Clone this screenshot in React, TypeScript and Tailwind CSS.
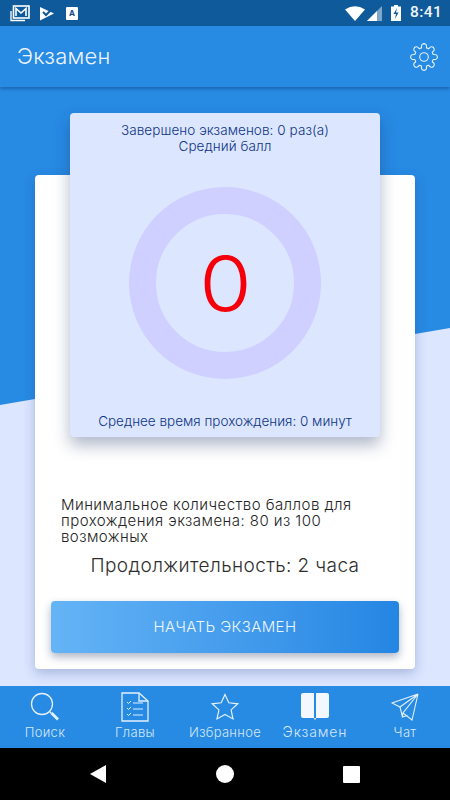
const F = "[font-family:Inter,'Noto_Sans',sans-serif]";

function Gear() {
  const teeth = [0, 45, 90, 135, 180, 225, 270, 315];
  const pts: string[] = [];
  const p = (r: number, a: number) => {
    const t = (a * Math.PI) / 180;
    return `${(14 + r * Math.cos(t)).toFixed(2)} ${(14 + r * Math.sin(t)).toFixed(2)}`;
  };
  teeth.forEach((a, i) => {
    pts.push(`${i === 0 ? "M" : "L"}${p(9.6, a - 15)}`);
    pts.push(`Q${p(13.6, a - 13)} ${p(13.4, a)}`);
    pts.push(`Q${p(13.6, a + 13)} ${p(9.6, a + 15)}`);
    pts.push(`Q${p(9.2, a + 22.5)} ${p(9.6, a + 30)}`);
  });
  return (
    <svg width="28" height="28" viewBox="0 0 28 28" fill="none" stroke="#e6f1ff" strokeWidth="1.1">
      <path d={pts.join(" ") + "Z"} />
      <circle cx="14" cy="14" r="4.3" />
    </svg>
  );
}

function NavItem({ label, icon, active }: { label: string; icon: React.ReactNode; active?: boolean }) {
  return (
    <div className="flex flex-1 flex-col items-center">
      <div className="flex h-[33px] items-center justify-center">{icon}</div>
      <span
        className={
          active
            ? "-mt-[1px] text-[14px] leading-[20px] font-light tracking-[0.9px] text-[#d5e7fb]"
            : "-mt-[1px] text-[13px] leading-[20px] font-light tracking-[0.3px] text-[#d5e7fb]"
        }
      >
        {label}
      </span>
    </div>
  );
}

export default function App() {
  return (
    <div className={`flex h-[800px] w-[450px] flex-col overflow-hidden bg-black ${F}`}>
      {/* status bar */}
      <div className="flex h-[26px] items-center justify-between bg-[#0f5a9a] pr-[2px] pl-[10px]">
        <div className="flex items-center gap-[10px]">
          <svg width="20" height="17" viewBox="0 0 20 17" fill="none">
            <path d="M1 6v9.5h14" stroke="#fff" strokeWidth="1.3" />
            <rect x="3.5" y="1" width="15.5" height="12" fill="#0f5a9a" stroke="#fff" strokeWidth="1.6" />
            <path d="M6 11V3.5l5 4.5 5-4.5V11" stroke="#fff" strokeWidth="1.6" />
          </svg>
          <svg width="15" height="15" viewBox="0 0 15 15">
            <path d="M0 1l14 6.500L0 14.500z" fill="#fff" />
            <path d="M3 6l3 3 7-7" fill="none" stroke="#0f5a9a" strokeWidth="2" />
          </svg>
          <div className="ml-[1px] flex h-[13px] w-[12px] items-center justify-center rounded-[1px] bg-white text-[8px] leading-none font-bold text-[#0f4a8a]">A</div>
        </div>
        <div className="flex items-center">
          <svg width="20" height="15" viewBox="0 0 20 15"><path d="M0 3.500Q10-3 20 3.500L10 15z" fill="#fff" /></svg>
          <svg width="15" height="15" viewBox="0 0 15 15" className="ml-[2px]"><path d="M15 0v15H0z" fill="#7da6ca" /><path d="M10 5v10H0z" fill="#fff" /></svg>
          <svg width="10" height="16" viewBox="0 0 10 16" className="ml-[9px]"><path d="M3 0h4v1.500h3V16H0V1.500h3z" fill="#fff" /><path d="M6 3L2.500 9H5l-1 5 3.500-6.500H5z" fill="#0f5a9a" /></svg>
          <span className="ml-[9px] w-[38px] text-[15.5px] font-medium tracking-[0.4px] text-[#eef5fc] [font-family:Roboto,sans-serif]">8:41</span>
        </div>
      </div>

      {/* app bar */}
      <div className="relative z-20 flex h-[61px] items-center justify-between bg-[#278ae3] pr-[12px] pl-[17px] shadow-[0_2px_3px_rgba(10,60,120,0.45)]">
        <h1 className="text-[22px] font-light tracking-[0.2px] text-[#eaf4ff]">Экзамен</h1>
        <Gear />
      </div>

      {/* content */}
      <div className="relative flex-1 bg-[#dce6ff]">
        <div className="absolute inset-0 bg-[#278ae3] [clip-path:polygon(0_0,100%_0,100%_241px,0_318px)]" />
        <div className="relative mx-[35px] mt-[88px] flex h-[494px] flex-col rounded-[4px] bg-white px-[16px] shadow-[0_4px_12px_rgba(40,70,140,0.3)]">
          <div className="mx-[19px] -mt-[62px] flex h-[324px] flex-col items-center rounded-[4px] bg-[#dce6ff] pt-[9px] pb-[8px] text-[13.5px] leading-[16px] font-light text-[#0d3585] shadow-[0_8px_16px_rgba(30,50,100,0.35)]">
            <p className="tracking-[0.07px]">Завершено экзаменов: 0 раз(а)</p>
            <p className="tracking-[0.07px]">Средний балл</p>
            <div className="mt-[33px] flex h-[192px] w-[192px] items-center justify-center rounded-full border-[27px] border-[#cfd0ff]">
              <span className="inline-block scale-x-[1.12] text-[76px] leading-none font-light text-[#f5000a]">0</span>
            </div>
            <p className="mt-auto">Среднее время прохождения: 0 минут</p>
          </div>
          <p className="mt-[60px] pl-[10px] text-[15px] leading-[16px] font-light tracking-[0.45px] text-[#222222]">
            Минимальное количество баллов для прохождения экзамена: 80 из 100 возможных
          </p>
          <p className="mt-[9px] text-center text-[19px] leading-[24px] font-light tracking-[0.4px] text-[#2e2e2e]">Продолжительность: 2 часа</p>
          <button className="mt-[23px] h-[52px] rounded-[4px] bg-gradient-to-r from-[#64b4f6] to-[#2386e3] text-[15px] font-light tracking-[0.4px] text-[#edf6ff] shadow-[0_4px_8px_rgba(20,40,90,0.35)]">
            НАЧАТЬ ЭКЗАМЕН
          </button>
        </div>
      </div>

      {/* bottom nav */}
      <div className="relative z-10 flex h-[62px] bg-[#278ae3] pt-[4px]">
        <NavItem label="Поиск" icon={
          <svg width="30" height="30" viewBox="0 0 30 30" fill="none" stroke="#e3f0ff">
            <circle cx="12" cy="12" r="10.500" strokeWidth="1.3" />
            <path d="M19.500 19.500l2 2" strokeWidth="1.3" />
            <path d="M21.500 21l6.500 6.500" strokeWidth="2.800" />
          </svg>} />
        <NavItem label="Главы" icon={
          <svg width="28" height="30" viewBox="0 0 28 30" fill="none" stroke="#e3f0ff" strokeWidth="1.300">
            <path d="M1 1h17l9 8v20H1z" />
            <path d="M18 1v8h9" />
            <path d="M6 10l1.500 1.500L10 9M6 16l1.500 1.500L10 15M6 22l1.500 1.500L10 21M12 11h10M12 17h10M12 23h10" strokeWidth="1" />
          </svg>} />
        <NavItem label="Избранное" icon={
          <svg width="28" height="28" viewBox="0 0 28 28" fill="none" stroke="#e3f0ff" strokeWidth="1.200">
            <path d="M14 1.500l3.800 8.300 9 1-6.700 6.100 1.900 9L14 21.400l-8 4.500 1.900-9L1.200 10.800l9-1z" />
          </svg>} />
        <NavItem active label="Экзамен" icon={
          <svg width="28" height="28" viewBox="0 0 28 28">
            <path d="M2 0h11v25H2a2 2 0 0 1-2-2V2a2 2 0 0 1 2-2zM15 0h11a2 2 0 0 1 2 2v21a2 2 0 0 1-2 2H15z" fill="#f3f8ff" />
            <path d="M13 25h2l-1 2.500z" fill="#f3f8ff" />
          </svg>} />
        <NavItem label="Чат" icon={
          <svg width="28" height="28" viewBox="0 0 28 28" fill="none" stroke="#e3f0ff" strokeWidth="1.100">
            <path d="M27 1L1 10l8 4zM27 1L9 14l2.500 10M27 1l-6 26-9-7zM12 20l-.5 4 5-1.500" />
          </svg>} />
      </div>

      {/* system nav */}
      <div className="flex h-[52px] items-center justify-center bg-black">
        <svg width="16" height="18" viewBox="0 0 16 18" className="mr-[110px]"><path d="M16 0v18L0 9z" fill="#fff" /></svg>
        <div className="h-[18px] w-[18px] rounded-full bg-white" />
        <div className="ml-[109px] h-[17px] w-[17px] rounded-[1px] bg-white" />
      </div>
    </div>
  );
}
